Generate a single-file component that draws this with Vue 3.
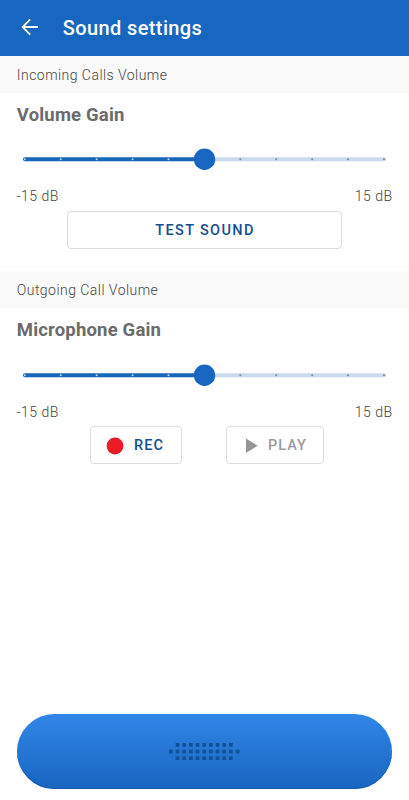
<script setup>
const ticks = Array.from({ length: 11 }, (_, i) => i)
const dots = [
  ...Array.from({ length: 9 }, (_, i) => ({ x: 7.67 + i * 6.67, y: 1 })),
  ...Array.from({ length: 11 }, (_, i) => ({ x: 1 + i * 6.67, y: 7.67 })),
  ...Array.from({ length: 9 }, (_, i) => ({ x: 7.67 + i * 6.67, y: 14.33 })),
]
const sections = [
  { id: 'incoming', heading: 'Incoming Calls Volume', title: 'Volume Gain' },
  { id: 'outgoing', heading: 'Outgoing Call Volume', title: 'Microphone Gain' },
]
</script>

<template>
  <div class="screen">
    <header class="bar">
      <svg class="back" width="18" height="18" viewBox="0 0 18 18" fill="none" stroke="#fff" stroke-width="1.8">
        <path d="M17 9H2M9.2 1.4 1.6 9l7.6 7.6" />
      </svg>
      <h1>Sound settings</h1>
    </header>

    <section v-for="s in sections" :key="s.id" class="group">
      <div class="heading">{{ s.heading }}</div>
      <h2>{{ s.title }}</h2>
      <svg class="slider" width="409" height="24" viewBox="0 0 409 24">
        <path d="M204.5 12.3H384" stroke="#c9daef" stroke-width="4" stroke-linecap="round" />
        <path d="M25 12.3H204.5" stroke="#1766b8" stroke-width="4" stroke-linecap="round" />
        <circle
          v-for="t in ticks" :key="t" :cx="24.8 + t * 35.92" cy="12.3" r="1"
          :fill="t < 5 ? '#b9d6f2' : '#7187a3'"
        />
        <circle cx="204.5" cy="12.3" r="10.7" fill="#1866c0" />
      </svg>
      <div class="range"><span>-15 dB</span><span>15 dB</span></div>
      <div v-if="s.id === 'incoming'" class="actions">
        <button class="test">TEST SOUND</button>
      </div>
      <div v-else class="actions pair">
        <button class="rec">
          <svg width="18" height="18" viewBox="0 0 18 18"><circle cx="9" cy="9" r="8.4" fill="#ed1c24" /></svg>
          <span>REC</span>
        </button>
        <button class="play" disabled>
          <svg width="12" height="16" viewBox="0 0 12 16"><path d="M0 .6 11.7 7.8 0 15Z" fill="#969696" /></svg>
          <span>PLAY</span>
        </button>
      </div>
    </section>

    <button class="talk" aria-label="Talk">
      <svg width="72" height="20" viewBox="0 0 72 20">
        <rect v-for="(d, i) in dots" :key="i" :x="d.x" :y="d.y" width="3.7" height="3.7" fill="#125196" />
      </svg>
    </button>
  </div>
</template>

<style>
body { margin: 0; background: #fff; }
</style>

<style scoped>
.screen {
  box-sizing: border-box;
  width: 409px;
  height: 800px;
  overflow: hidden;
  display: flex;
  flex-direction: column;
  background: #fff;
  font-family: Roboto, sans-serif;
}
.bar {
  flex: none;
  display: flex;
  align-items: center;
  height: 55.6px;
  padding-left: 20.5px;
  gap: 24.3px;
  background: #1766c0;
}
.back { margin-top: -2px; }
h1, h2 { margin: 0; white-space: nowrap; }
h1 { font-size: 20px; font-weight: 500; line-height: 56px; color: #fff; letter-spacing: .38px; }
.group { height: 215.5px; flex: none; }
.heading {
  height: 37.3px;
  padding-left: 16.8px;
  background: #fafafa;
  color: #444;
  font-size: 14px;
  font-weight: 300;
  line-height: 39.8px;
  letter-spacing: .46px;
}
h2 {
  height: 54.4px;
  padding-left: 16.8px;
  font-size: 18.5px;
  line-height: 44.8px;
  font-weight: 700;
  letter-spacing: .18px;
  color: #6b6b6b;
}
.slider { display: block; }
.range {
  display: flex;
  justify-content: space-between;
  height: 39.5px;
  padding: 0 16.5px;
  color: #444;
  font-size: 14px;
  font-weight: 300;
  line-height: 50px;
  letter-spacing: .48px;
}
.actions { display: flex; justify-content: center; }
.pair { gap: 44px; padding-left: 5px; }
button {
  box-sizing: border-box;
  display: flex;
  align-items: center;
  margin: 0;
  font-family: inherit;
}
.actions button {
  height: 38px;
  border: 1px solid #dcdcdc;
  border-radius: 4px;
  background: #fff;
  color: #134f8f;
  font-size: 14.5px;
  font-weight: 500;
  letter-spacing: 1.35px;
  padding: 1px 0 0;
}
.actions .test { width: 275px; padding-left: 1px; justify-content: center; }
.actions .rec { width: 92px; padding-left: 15px; gap: 10px; letter-spacing: 1.1px; }
.actions .play { width: 98px; padding-left: 18.5px; gap: 10.5px; color: #999; letter-spacing: 1px; }
.talk {
  flex: none;
  justify-content: center;
  height: 75px;
  margin: auto 17px 11px 16.5px;
  padding: 0;
  border: 0;
  border-radius: 38px;
  background: linear-gradient(#3286e8, #1765bf);
  box-shadow: inset 0 -1px #155ba9;
}
</style>
